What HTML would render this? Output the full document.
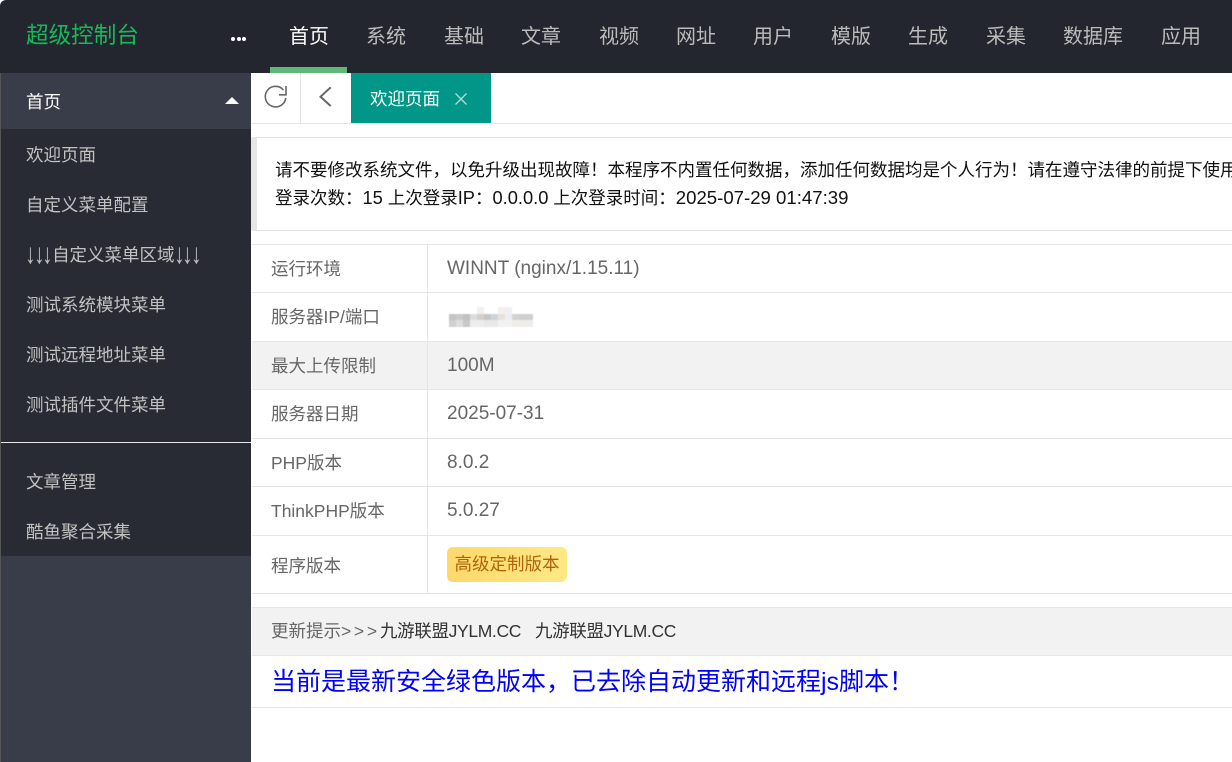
<!DOCTYPE html>
<html lang="zh"><head><meta charset="utf-8"><title>超级控制台</title>
<style>
*{box-sizing:border-box;margin:0;padding:0}
html,body{width:1232px;height:762px;overflow:hidden;background:#fff}
body{position:relative;font-family:"Liberation Sans","Noto Sans CJK SC",sans-serif;font-size:17.5px;color:#666}
.a{position:absolute;white-space:nowrap}
.b{position:absolute}
.n{position:absolute;top:1px;height:72px;line-height:72px;font-size:20px;color:#bbb;white-space:nowrap}
.s{position:absolute;left:26px;color:#c2c2c2;white-space:nowrap;line-height:24px;height:24px}
.h{position:absolute;left:252px;right:0;height:1px;background:#e6e6e6}
.t{position:absolute;left:271px;line-height:24px;white-space:nowrap}
.v{position:absolute;left:447px;line-height:24px;white-space:nowrap;font-size:19px}
.l{font-size:18.3px}
.ar{display:inline-block;width:8.7px;text-align:center;transform:scale(1.2,1.6);transform-origin:50% 60%;font-weight:bold}
</style></head><body>
<div class="b" style="left:0;top:0;width:1232px;height:73px;background:#23262e;border-top-left-radius:6px"></div>
<div class="a" style="left:26px;top:20px;line-height:32px;font-size:22.6px;color:#16b95a">超级控制台</div>
<div class="b" style="left:231px;top:37px;width:4px;height:4px;border-radius:50%;background:#fff"></div>
<div class="b" style="left:237px;top:37px;width:4px;height:4px;border-radius:50%;background:#fff"></div>
<div class="b" style="left:242px;top:37px;width:4px;height:4px;border-radius:50%;background:#fff"></div>
<div class="n" style="left:289px;color:#fff">首页</div>
<div class="n" style="left:366px">系统</div>
<div class="n" style="left:444px">基础</div>
<div class="n" style="left:521px">文章</div>
<div class="n" style="left:599px">视频</div>
<div class="n" style="left:676px">网址</div>
<div class="n" style="left:753px">用户</div>
<div class="n" style="left:831px">模版</div>
<div class="n" style="left:908px">生成</div>
<div class="n" style="left:986px">采集</div>
<div class="n" style="left:1063px">数据库</div>
<div class="n" style="left:1161px">应用</div>
<div class="b" style="left:270px;top:67px;width:77px;height:6px;background:#5fb878"></div>

<div class="b" style="left:0;top:73px;width:251px;height:689px;background:#393d49"></div>
<div class="b" style="left:1px;top:129px;width:250px;height:427px;background:#282b33"></div>
<div class="b" style="left:0;top:73px;width:1px;height:689px;background:#555"></div>
<div class="s" style="top:90px;color:#fff">首页</div>
<div class="b" style="left:225px;top:97px;width:0;height:0;border-left:7px solid transparent;border-right:7px solid transparent;border-bottom:7px solid #fff"></div>
<div class="s" style="top:143px">欢迎页面</div>
<div class="s" style="top:193px">自定义菜单配置</div>
<div class="s" style="top:243px"><span class="ar">↓</span><span class="ar">↓</span><span class="ar">↓</span>自定义菜单区域<span class="ar">↓</span><span class="ar">↓</span><span class="ar">↓</span></div>
<div class="s" style="top:293px">测试系统模块菜单</div>
<div class="s" style="top:343px">测试远程地址菜单</div>
<div class="s" style="top:393px">测试插件文件菜单</div>
<div class="b" style="left:1px;top:442px;width:250px;height:1px;background:#e6e6e6"></div>
<div class="s" style="top:470px">文章管理</div>
<div class="s" style="top:520px">酷鱼聚合采集</div>

<svg class="b" style="left:262px;top:84px" width="28" height="26" viewBox="0 0 28 26" fill="none" stroke="#666" stroke-width="1.6"><path d="M21.5 6A10.3 10.3 0 1 0 23.8 14"/><path d="M24 2V10.8H17"/></svg>
<div class="b" style="left:300px;top:73px;width:1px;height:50px;background:#e6e6e6"></div>
<svg class="b" style="left:316px;top:85px" width="18" height="24" viewBox="0 0 18 24" fill="none" stroke="#666" stroke-width="2"><path d="M14.7 2.3L4.5 11.7L14.7 21"/></svg>
<div class="b" style="left:351px;top:73px;width:140px;height:50px;background:#009688"></div>
<div class="a" style="left:370px;top:87px;line-height:24px;color:#fff">欢迎页面</div>
<svg class="b" style="left:454px;top:92px" width="14" height="14" viewBox="0 0 14 14" stroke="#b5dcd8" stroke-width="1.3"><path d="M1.5 1.5L12.5 12.5M12.5 1.5L1.5 12.5"/></svg>
<div class="h" style="top:123px"></div>

<div class="b" style="left:252px;top:137px;width:980px;height:94px;background:#fff;border-top:1px solid #e6e6e6;border-bottom:1px solid #e6e6e6"></div>
<div class="b" style="left:251px;top:138px;width:6px;height:92px;background:#e6e6e6"></div>
<div class="b" style="left:275px;top:157px;width:957px;height:26px;overflow:hidden;line-height:26px;color:#111;white-space:nowrap">请不要修改系统文件，以免升级出现故障！本程序不内置任何数据，添加任何数据均是个人行为！请在遵守法律的前提下使用本程序！</div>
<div class="a" style="left:275px;top:185px;line-height:26px;color:#111">登录次数：<span class="l">15</span> 上次登录<span class="l">IP</span>：<span class="l">0.0.0.0</span> 上次登录时间：<span style="font-size:18.6px">2025-07-29 01:47:39</span></div>

<div class="b" style="left:252px;top:342px;width:980px;height:47px;background:#f2f2f2"></div>
<div class="h" style="top:244px"></div>
<div class="h" style="top:292px"></div>
<div class="h" style="top:341px"></div>
<div class="h" style="top:389px"></div>
<div class="h" style="top:438px"></div>
<div class="h" style="top:486px"></div>
<div class="h" style="top:535px"></div>
<div class="h" style="top:593px"></div>
<div class="b" style="left:427px;top:244px;width:1px;height:350px;background:#e6e6e6"></div>
<div class="t" style="top:257px">运行环境</div><div class="v" style="top:257px">WINNT (nginx/1.15.11)</div>
<div class="t" style="top:305px">服务器IP/端口</div>
<svg class="b" style="left:449px;top:307px;filter:blur(.6px)" width="84" height="21" shape-rendering="crispEdges">
<rect x="0" y="7" width="84" height="13" fill="#e4e4e4"/>
<rect x="0" y="7" width="7" height="6" fill="#c4c4c4"/><rect x="7" y="7" width="7" height="6" fill="#c9c9c9"/><rect x="14" y="7" width="7" height="6" fill="#c0c0c0"/><rect x="21" y="7" width="7" height="6" fill="#dcdcdc"/><rect x="28" y="7" width="7" height="6" fill="#d3cfca"/><rect x="35" y="7" width="7" height="6" fill="#c6c6ca"/><rect x="42" y="7" width="7" height="6" fill="#cfd3d8"/><rect x="49" y="7" width="7" height="6" fill="#e6e2dc"/><rect x="56" y="7" width="7" height="6" fill="#eeeef2"/><rect x="63" y="7" width="7" height="6" fill="#d2d2d2"/><rect x="70" y="7" width="14" height="6" fill="#cfcfcf"/>
<rect x="0" y="13" width="7" height="7" fill="#d0d0d0"/><rect x="7" y="13" width="7" height="7" fill="#dedede"/><rect x="14" y="13" width="7" height="7" fill="#c8c8c8"/><rect x="21" y="13" width="14" height="7" fill="#ededed"/><rect x="35" y="13" width="14" height="7" fill="#e8e8ea"/><rect x="49" y="13" width="14" height="7" fill="#f2f2f2"/><rect x="63" y="13" width="14" height="7" fill="#efede9"/><rect x="77" y="13" width="7" height="7" fill="#ebedeb"/>
<rect x="28" y="0" width="7" height="7" fill="#f0f0f0"/><rect x="49" y="0" width="7" height="7" fill="#f3efec"/><rect x="56" y="0" width="7" height="7" fill="#f0f0f4"/>
</svg>
<div class="t" style="top:354px">最大上传限制</div><div class="v" style="top:354px">100M</div>
<div class="t" style="top:402px">服务器日期</div><div class="v" style="top:402px">2025-07-31</div>
<div class="t" style="top:451px">PHP版本</div><div class="v" style="top:451px">8.0.2</div>
<div class="t" style="top:499px">ThinkPHP版本</div><div class="v" style="top:499px">5.0.27</div>
<div class="t" style="top:554px">程序版本</div>
<div class="a" style="left:447px;top:547px;width:120px;height:35px;line-height:34px;border-radius:6px;background:linear-gradient(90deg,#ffd86b,#ffe985);color:#b0650c;text-align:center">高级定制版本</div>

<div class="b" style="left:252px;top:607px;width:980px;height:49px;background:#f2f2f2;border-top:1px solid #e6e6e6;border-bottom:1px solid #e6e6e6"></div>
<div class="t" style="top:619px">更新提示<span style="letter-spacing:2.7px">&gt;&gt;&gt;</span></div>
<div class="a" style="left:380px;top:619px;line-height:24px;color:#333;letter-spacing:-.35px">九游联盟JYLM.CC</div>
<div class="a" style="left:535px;top:619px;line-height:24px;color:#333;letter-spacing:-.35px">九游联盟JYLM.CC</div>
<div class="a" style="left:271px;top:664px;line-height:36px;font-size:25px;color:#00f">当前是最新安全绿色版本，已去除自动更新和远程js脚本！</div>
<div class="h" style="top:707px"></div>
</body></html>
